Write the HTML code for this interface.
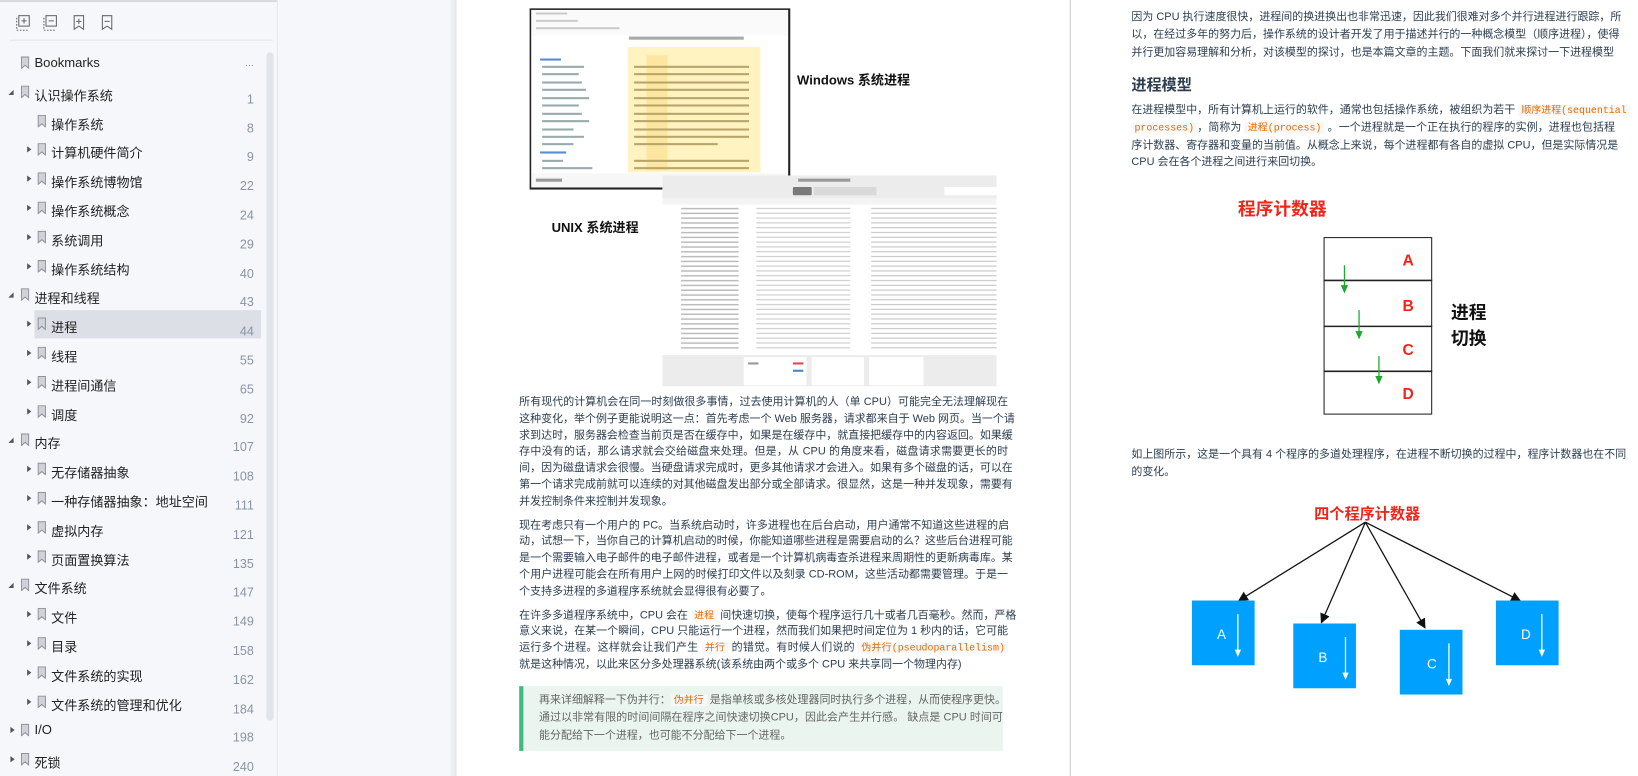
<!DOCTYPE html>
<html><head><meta charset="utf-8">
<style>
html,body{margin:0;padding:0;width:1638px;height:776px;overflow:hidden;background:#f5f7fa;}
#w{position:absolute;left:0;top:0;width:1568px;height:743px;transform:scale(1.04464,1.0444);transform-origin:0 0;font-family:"Liberation Sans","Noto Sans CJK SC",sans-serif;}
.abs{position:absolute;}
#side{left:0;top:0;width:265px;height:743px;background:#f5f7fa;border-right:1px solid #e4e6ea;}
.row{position:absolute;height:27px;font-size:12.5px;color:#222;}
.row .t{position:absolute;top:6px;white-space:nowrap;}
.row .n{position:absolute;right:0;top:13px;color:#8a94a6;font-size:12px;width:40px;text-align:right;}
.bm{position:absolute;top:7px;width:8px;height:12px;}
.tri{position:absolute;top:10px;width:0;height:0;}
.page{background:#fff;}
.txt{font-size:10.5px;line-height:15.8px;color:#2c3e50;}
.ln{white-space:nowrap;text-align:justify;text-align-last:justify;height:15.8px;}
.r .ln{height:16.8px;}
.r{line-height:16.8px;}
.ln.l{text-align-last:left;}
code{font-family:"Liberation Mono","Noto Sans CJK SC",monospace;color:#e96900;background:#f8f8f8;font-size:9.5px;padding:0 3px;}
</style></head><body><div id="w">
<div id="side" class="abs">
 <div class="abs" style="left:0;top:0;width:265px;height:2px;background:#d8dade"></div>
 <svg class="abs" style="left:14px;top:13px" width="100" height="18" viewBox="0 0 100 18" fill="none" stroke="#666" stroke-width="1">
  <rect x="4" y="2" width="10" height="10"/><path d="M9 4.5v5M6.5 7h5"/><path d="M2 4v12h11" stroke-dasharray="1.5 1.5"/>
  <rect x="30" y="2" width="10" height="10"/><path d="M32.5 7h5"/><path d="M28 4v12h11" stroke-dasharray="1.5 1.5"/>
  <path d="M57 2h9v13l-4.5-3-4.5 3z"/><path d="M61.5 5v5M59 7.5h5"/>
  <path d="M84 2h9v13l-4.5-3-4.5 3z"/><path d="M86 7.5h5"/>
 </svg>
 <div class="abs" style="left:9px;top:38px;width:252px;height:1px;background:#e2e4e8"></div>
 <div class="abs" style="left:255px;top:50px;width:7px;height:640px;background:#e1e4e8;border-radius:4px"></div>
 <div class="abs" style="left:33px;top:297px;width:217px;height:27px;background:#dcdfe5"></div>
</div>
<div id="rows"></div>
<div class="abs" style="left:266px;top:0;width:171px;height:743px;background:#f5f7fa"></div>
<div class="abs" style="left:430px;top:0;width:7px;height:743px;background:linear-gradient(90deg,rgba(0,0,0,0),rgba(0,0,0,0.08))"></div>
<div class="abs page" style="left:437px;top:0;width:1131px;height:743px"></div>
<div class="abs" style="left:1024px;top:0;width:1px;height:743px;background:#c8c8c8"></div>

<!-- Windows screenshot -->
<svg class="abs" style="left:507px;top:8px" width="250" height="174" viewBox="0 0 250 174">
 <rect x="0.5" y="0.5" width="248" height="172" fill="#fff" stroke="#222" stroke-width="2"/>
 <rect x="2" y="2" width="245" height="24" fill="#fafafa"/>
 <rect x="94" y="37" width="127" height="120" fill="#fff3c2"/>
 <rect x="112" y="45" width="20" height="110" fill="#fde7a0"/>
 <g fill="#ccc"><rect x="6" y="4" width="30" height="2"/><rect x="6" y="11" width="40" height="2"/><rect x="6" y="18" width="80" height="2"/></g>
 <g fill="#aaa"><rect x="95" y="27" width="110" height="3"/></g>
 <g fill="#9aa">
  <rect x="10" y="48" width="20" height="2" fill="#5a8ad6"/>
  <rect x="12" y="55" width="40" height="2"/><rect x="12" y="62" width="35" height="2"/><rect x="12" y="70" width="38" height="2"/><rect x="12" y="77" width="42" height="2"/><rect x="12" y="85" width="45" height="2"/><rect x="12" y="92" width="35" height="2"/><rect x="12" y="100" width="38" height="2"/><rect x="12" y="107" width="45" height="2"/><rect x="12" y="115" width="30" height="2"/><rect x="12" y="122" width="40" height="2"/><rect x="12" y="129" width="30" height="2"/>
  <rect x="10" y="137" width="25" height="2" fill="#5a8ad6"/>
  <rect x="12" y="145" width="20" height="2"/><rect x="12" y="152" width="48" height="2"/>
 </g>
 <g fill="#b9a56a"><rect x="100" y="55" width="110" height="2"/><rect x="100" y="62" width="110" height="2"/><rect x="100" y="70" width="110" height="2"/><rect x="100" y="77" width="110" height="2"/><rect x="100" y="85" width="110" height="2"/><rect x="100" y="92" width="110" height="2"/><rect x="100" y="100" width="110" height="2"/><rect x="100" y="107" width="110" height="2"/><rect x="100" y="115" width="110" height="2"/><rect x="100" y="122" width="110" height="2"/><rect x="100" y="129" width="80" height="2"/><rect x="100" y="145" width="110" height="2"/><rect x="100" y="152" width="110" height="2"/></g>
 <rect x="2" y="158" width="245" height="13" fill="#f7f7f7"/><rect x="6" y="163" width="25" height="3" fill="#999"/><rect x="205" y="161" width="36" height="7" fill="#ddd"/>
</svg>
<div class="abs" style="left:763px;top:66px;font-size:12.5px;font-weight:bold;color:#111">Windows 系统进程</div>
<div class="abs" style="left:528px;top:207px;font-size:12.5px;font-weight:bold;color:#111">UNIX 系统进程</div>
<!-- Mac screenshot -->
<svg class="abs" style="left:634px;top:168px" width="320" height="202" viewBox="0 0 320 202">
 <rect width="320" height="202" fill="#fff"/>
 <rect width="320" height="22" fill="#ececec"/>
 <rect x="130" y="3" width="50" height="3" fill="#999"/>
 <rect x="125" y="11" width="18" height="8" fill="#7a7a7a" rx="1"/><rect x="145" y="11" width="60" height="8" fill="#d9d9d9"/>
 <rect x="270" y="11" width="50" height="8" fill="#fff"/>
 <rect y="22" width="320" height="6" fill="#f4f4f4"/>
 <g fill="#aaa" id="rr"></g>
 <rect y="172" width="320" height="30" fill="#ececec"/>
 <rect x="78" y="174" width="60" height="27" fill="#fff"/><rect x="143" y="174" width="50" height="27" fill="#fff"/><rect x="198" y="174" width="52" height="27" fill="#fff"/>
 <rect x="82" y="179" width="10" height="2" fill="#999"/><rect x="125" y="179" width="10" height="2" fill="#e44"/><rect x="125" y="186" width="10" height="2" fill="#48c"/>
</svg>

<!-- left page text -->
<div class="abs txt" style="left:497px;top:378px;width:468px">
 <div class="ln">所有现代的计算机会在同一时刻做很多事情，过去使用计算机的人（单 CPU）可能完全无法理解现在</div>
 <div class="ln">这种变化，举个例子更能说明这一点：首先考虑一个 Web 服务器，请求都来自于 Web 网页。当一个请</div>
 <div class="ln">求到达时，服务器会检查当前页是否在缓存中，如果是在缓存中，就直接把缓存中的内容返回。如果缓</div>
 <div class="ln">存中没有的话，那么请求就会交给磁盘来处理。但是，从 CPU 的角度来看，磁盘请求需要更长的时</div>
 <div class="ln">间，因为磁盘请求会很慢。当硬盘请求完成时，更多其他请求才会进入。如果有多个磁盘的话，可以在</div>
 <div class="ln">第一个请求完成前就可以连续的对其他磁盘发出部分或全部请求。很显然，这是一种并发现象，需要有</div>
 <div class="ln l">并发控制条件来控制并发现象。</div>
 <div style="height:7px"></div>
 <div class="ln">现在考虑只有一个用户的 PC。当系统启动时，许多进程也在后台启动，用户通常不知道这些进程的启</div>
 <div class="ln">动，试想一下，当你自己的计算机启动的时候，你能知道哪些进程是需要启动的么？这些后台进程可能</div>
 <div class="ln">是一个需要输入电子邮件的电子邮件进程，或者是一个计算机病毒查杀进程来周期性的更新病毒库。某</div>
 <div class="ln">个用户进程可能会在所有用户上网的时候打印文件以及刻录 CD-ROM，这些活动都需要管理。于是一</div>
 <div class="ln l">个支持多进程的多道程序系统就会显得很有必要了。</div>
 <div style="height:7px"></div>
 <div class="ln">在许多多道程序系统中，CPU 会在 <code>进程</code> 间快速切换，使每个程序运行几十或者几百毫秒。然而，严格</div>
 <div class="ln">意义来说，在某一个瞬间，CPU 只能运行一个进程，然而我们如果把时间定位为 1 秒内的话，它可能</div>
 <div class="ln">运行多个进程。这样就会让我们产生 <code>并行</code> 的错觉。有时候人们说的 <code>伪并行(pseudoparallelism)</code></div>
 <div class="ln l">就是这种情况，以此来区分多处理器系统(该系统由两个或多个 CPU 来共享同一个物理内存)</div>
</div>
<div class="abs txt" style="left:497px;top:657px;width:444px;height:52px;padding:5px 0 5px 15px;background:#eaf5f0;border-left:4px solid #42b983;color:#666;line-height:17px">
 <div class="ln" style="height:17px">再来详细解释一下伪并行：<code>伪并行</code> 是指单核或多核处理器同时执行多个进程，从而使程序更快。</div>
 <div class="ln" style="height:17px">通过以非常有限的时间间隔在程序之间快速切换CPU，因此会产生并行感。 缺点是 CPU 时间可</div>
 <div class="ln l" style="height:17px">能分配给下一个进程，也可能不分配给下一个进程。</div>
</div>

<!-- right page -->
<div class="abs txt r" style="left:1083px;top:8px;width:463px">
 <div class="ln">因为 CPU 执行速度很快，进程间的换进换出也非常迅速，因此我们很难对多个并行进程进行跟踪，所</div>
 <div class="ln">以，在经过多年的努力后，操作系统的设计者开发了用于描述并行的一种概念模型（顺序进程），使得</div>
 <div class="ln l">并行更加容易理解和分析，对该模型的探讨，也是本篇文章的主题。下面我们就来探讨一下进程模型</div>
</div>
<div class="abs" style="left:1083px;top:70px;font-size:14.5px;font-weight:bold;color:#2c3e50">进程模型</div>
<div class="abs txt r" style="left:1083px;top:97px;width:463px">
 <div class="ln">在进程模型中，所有计算机上运行的软件，通常也包括操作系统，被组织为若干 <code>顺序进程(sequential</code></div>
 <div class="ln"><code>processes)</code>，简称为 <code>进程(process)</code> 。一个进程就是一个正在执行的程序的实例，进程也包括程</div>
 <div class="ln">序计数器、寄存器和变量的当前值。从概念上来说，每个进程都有各自的虚拟 CPU，但是实际情况是</div>
 <div class="ln l">CPU 会在各个进程之间进行来回切换。</div>
</div>
<div class="abs" style="left:1185px;top:186px;font-size:17px;font-weight:bold;color:#f0261b">程序计数器</div>
<svg class="abs" style="left:1260px;top:220px" width="190" height="185" viewBox="1260 220 190 185">
 <rect x="1267.5" y="227.5" width="103" height="169" fill="none" stroke="#222" stroke-width="1"/>
 <path d="M1267 268.5h104M1267 312.5h104M1267 355.5h104" stroke="#222" stroke-width="1.5"/>
 <g stroke="#1aaa2a" stroke-width="1.2"><path d="M1287 254v20M1301 297v21M1320 341v20"/></g>
 <g fill="#1aaa2a"><path d="M1283.5 273h7l-3.5 8z"/><path d="M1297.5 317h7l-3.5 8z"/><path d="M1316.5 360h7l-3.5 8z"/></g>
 <g font-family="Liberation Sans,sans-serif" font-weight="bold" font-size="15" fill="#f0261b" text-anchor="middle">
  <text x="1348" y="254">A</text><text x="1348" y="298">B</text><text x="1348" y="340">C</text><text x="1348" y="382">D</text></g>
</svg>
<div class="abs" style="left:1389px;top:287px;font-size:17px;font-weight:bold;color:#111;line-height:25px">进程<br>切换</div>
<div class="abs txt r" style="left:1083px;top:427px;width:463px">
 <div class="ln">如上图所示，这是一个具有 4 个程序的多道处理程序，在进程不断切换的过程中，程序计数器也在不同</div>
 <div class="ln l">的变化。</div>
</div>
<div class="abs" style="left:1258px;top:481px;font-size:14.5px;font-weight:bold;color:#f0261b">四个程序计数器</div>
<svg class="abs" style="left:1130px;top:495px" width="380" height="180" viewBox="1130 495 380 180">
 <defs><marker id="ah" markerWidth="8" markerHeight="8" refX="7" refY="4" orient="auto"><path d="M0 0L8 4L0 8z" fill="#111"/></marker></defs>
 <g stroke="#111" stroke-width="1.2" marker-end="url(#ah)">
  <path d="M1307 500L1186 575"/><path d="M1307 500L1265 596"/><path d="M1307 500L1364 601"/><path d="M1307 500L1455 575"/></g>
 <g fill="#00a0fe"><rect x="1141" y="575" width="60" height="62"/><rect x="1238" y="597" width="60" height="62"/><rect x="1340" y="603" width="60" height="62"/><rect x="1432" y="575" width="60" height="62"/></g>
 <g stroke="#fff" stroke-width="1.2"><path d="M1185 588v36M1288 610v36M1387 616v36M1476 588v36"/></g>
 <g fill="#fff"><path d="M1182 622h6l-3 7z"/><path d="M1285 644h6l-3 7z"/><path d="M1384 650h6l-3 7z"/><path d="M1473 622h6l-3 7z"/></g>
 <g font-family="Liberation Sans,sans-serif" font-size="13" fill="#fff"><text x="1165" y="612">A</text><text x="1262" y="634">B</text><text x="1366" y="640">C</text><text x="1456" y="612">D</text></g>
</svg>
<script>
var items=[["Bookmarks",0,"","..."],["认识操作系统",1,"d","1"],["操作系统",2,"","8"],["计算机硬件简介",2,"r","9"],["操作系统博物馆",2,"r","22"],["操作系统概念",2,"r","24"],["系统调用",2,"r","29"],["操作系统结构",2,"r","40"],["进程和线程",1,"d","43"],["进程",2,"r","44"],["线程",2,"r","55"],["进程间通信",2,"r","65"],["调度",2,"r","92"],["内存",1,"d","107"],["无存储器抽象",2,"r","108"],["一种存储器抽象：地址空间",2,"r","111"],["虚拟内存",2,"r","121"],["页面置换算法",2,"r","135"],["文件系统",1,"d","147"],["文件",2,"r","149"],["目录",2,"r","158"],["文件系统的实现",2,"r","162"],["文件系统的管理和优化",2,"r","184"],["I/O",1,"r","198"],["死锁",1,"r","240"]];
var h="";
items.forEach(function(it,i){var y=47+i*27.8;var o=it[1]==2?16:0;
h+='<div class="row" style="left:0;top:'+y+'px;width:243px">';
if(it[2]=="d")h+='<span class="tri" style="left:'+(8+o)+'px;top:11px;border-left:5px solid transparent;border-bottom:5px solid #555"></span>';
if(it[2]=="r")h+='<span class="tri" style="left:'+(10+o)+'px;border-top:3.5px solid transparent;border-bottom:3.5px solid transparent;border-left:4px solid #555"></span>';
h+='<svg class="bm" style="left:'+(20+o)+'px" viewBox="0 0 8 12"><path d="M0.5 0.5h7v11l-3.5-3-3.5 3z" fill="#cfd2d8" stroke="#8e939b"/></svg>';
h+='<span class="t" style="left:'+(33+o)+'px">'+it[0]+'</span><span class="n"'+(i==0?' style="top:8px;font-size:10px"':'')+'>'+it[3]+'</span></div>';});
document.getElementById("rows").innerHTML=h;
var r="";for(var k=0;k<30;k++){var y=31+k*4.6;r+='<rect x="18" y="'+y+'" width="55" height="1.4" fill="#bbb"/>';
r+='<rect x="200" y="'+y+'" width="120" height="1.2" fill="#ccc"/><rect x="90" y="'+y+'" width="90" height="1.2" fill="#d2d2d2"/>';}
document.getElementById("rr").innerHTML=r;
</script>
</div></body></html>
